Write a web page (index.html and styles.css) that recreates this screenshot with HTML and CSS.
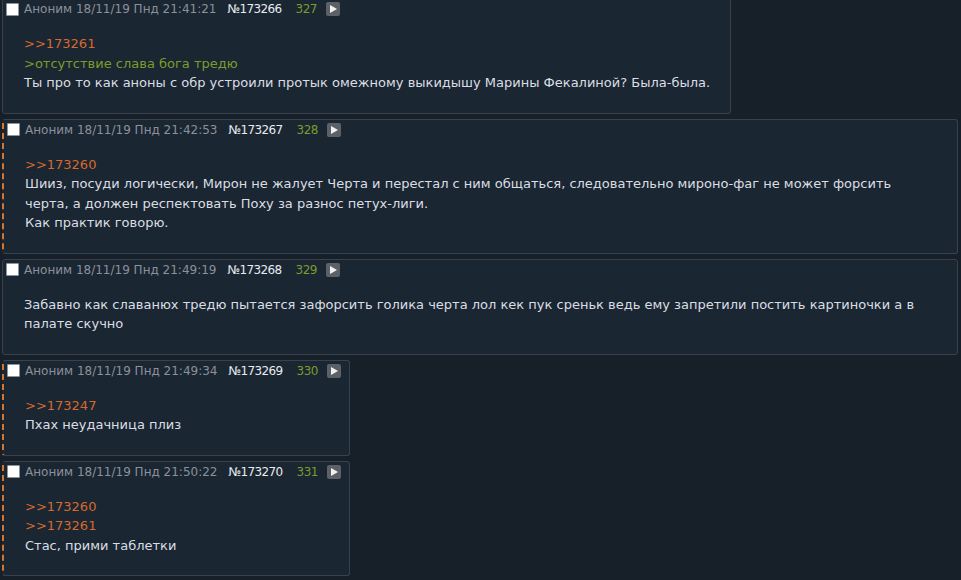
FILE: index.html
```html
<!DOCTYPE html>
<html lang="ru">
<head>
<meta charset="utf-8">
<title>Тред</title>
<link rel="stylesheet" href="styles.css">
</head>
<body>
<div class="thread">
  <div class="post">
    <div class="head">
      <span class="check"></span>
      <span class="meta">Аноним 18/11/19 Пнд 21:41:21</span>
      <span class="num">№173266</span>
      <span class="cnt">327</span>
      <span class="play"></span>
    </div>
    <div class="body">
      <div class="link">&gt;&gt;173261</div>
      <div class="quote">&gt;отсутствие слава бога тредю</div>
      <div>Ты про то как аноны с обр устроили протык омежному выкидышу Марины Фекалиной? Была-была.</div>
    </div>
  </div>
  <div class="post hl">
    <div class="head">
      <span class="check"></span>
      <span class="meta">Аноним 18/11/19 Пнд 21:42:53</span>
      <span class="num">№173267</span>
      <span class="cnt">328</span>
      <span class="play"></span>
    </div>
    <div class="body">
      <div class="link">&gt;&gt;173260</div>
      <div>Шииз, посуди логически, Мирон не жалует Черта и перестал с ним общаться, следовательно мироно-фаг не может форсить черта, а должен респектовать Поху за разнос петух-лиги.</div>
      <div>Как практик говорю.</div>
    </div>
  </div>
  <div class="post">
    <div class="head">
      <span class="check"></span>
      <span class="meta">Аноним 18/11/19 Пнд 21:49:19</span>
      <span class="num">№173268</span>
      <span class="cnt">329</span>
      <span class="play"></span>
    </div>
    <div class="body">
      <div>Забавно как славанюх тредю пытается зафорсить голика черта лол кек пук среньк ведь ему запретили постить картиночки а в палате скучно</div>
    </div>
  </div>
  <div class="post hl">
    <div class="head">
      <span class="check"></span>
      <span class="meta">Аноним 18/11/19 Пнд 21:49:34</span>
      <span class="num">№173269</span>
      <span class="cnt">330</span>
      <span class="play"></span>
    </div>
    <div class="body">
      <div class="link">&gt;&gt;173247</div>
      <div>Пхах неудачница плиз</div>
    </div>
  </div>
  <div class="post hl">
    <div class="head">
      <span class="check"></span>
      <span class="meta">Аноним 18/11/19 Пнд 21:50:22</span>
      <span class="num">№173270</span>
      <span class="cnt">331</span>
      <span class="play"></span>
    </div>
    <div class="body">
      <div class="link">&gt;&gt;173260</div>
      <div class="link">&gt;&gt;173261</div>
      <div>Стас, прими таблетки</div>
    </div>
  </div>
</div>
</body>
</html>
```
FILE: styles.css
```css
html, body {
  margin: 0;
  padding: 0;
  background: #171f28;
  height: 100%;
  overflow: hidden;
}
body {
  font-family: "DejaVu Sans", sans-serif;
  font-size: 13px;
  color: #dadee2;
}
.thread {
  display: flex;
  flex-direction: column;
  align-items: flex-start;
  gap: 5px;
  margin-top: -2px;
  padding: 0 3px 0 2px;
}
.post {
  background: #1b2633;
  border: 1px solid #38424e;
  border-radius: 3px;
  padding: 0 8px 20px 3px;
  max-width: calc(100% - 12px);
}
.post.hl {
  border-left: 2px dashed #d9742d;
}
.head {
  display: flex;
  align-items: center;
  height: 20px;
  font-size: 12px;
}
.check {
  width: 11px;
  height: 11px;
  background: #fff;
  border: 1px solid #8d949b;
  border-radius: 1px;
  margin-right: 5px;
}
.meta {
  color: #8a9199;
}
.num {
  color: #e8ecef;
  margin-left: 11px;
  letter-spacing: -0.6px;
}
.cnt {
  color: #7a9c2b;
  margin-left: 14px;
  letter-spacing: -0.6px;
}
.play {
  position: relative;
  width: 14px;
  height: 14px;
  background: #5c6167;
  border-radius: 2px;
  margin-left: 9px;
}
.play::after {
  content: "";
  position: absolute;
  left: 4px;
  top: 3px;
  border-left: 7px solid #f2f2f2;
  border-top: 4px solid transparent;
  border-bottom: 4px solid transparent;
}
.body {
  margin: 15px 12px 0 18px;
  line-height: 19.5px;
}
.link {
  color: #d6692c;
}
.quote {
  color: #7a9c2b;
}
```
